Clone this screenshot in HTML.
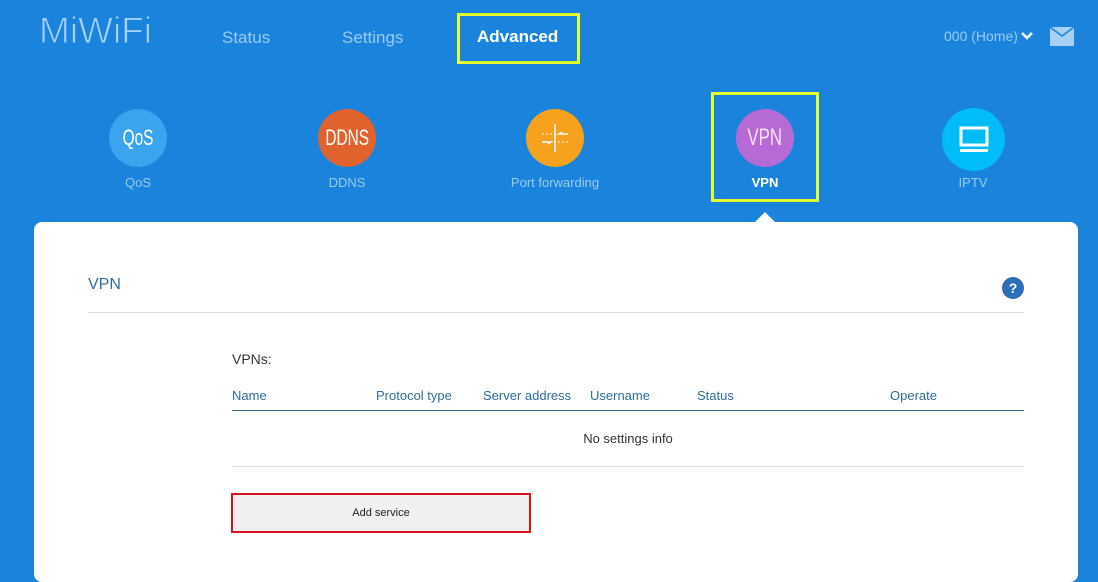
<!DOCTYPE html>
<html><head><style>
*{margin:0;padding:0;box-sizing:border-box}
body{width:1098px;height:565px;overflow:hidden;background:#1a84dc;font-family:"Liberation Sans",sans-serif;position:relative}
.a{position:absolute}
.logo{left:39px;top:10px;font-size:37px;color:#a8d0f5;font-family:"Liberation Sans",sans-serif;letter-spacing:0px;transform:scaleX(1.0);transform-origin:left;-webkit-text-stroke:1px #1a84dc}
.nav{top:28px;font-size:17px;color:#9ccaf2}
.yb{border:3px solid #e6ff2e}
.c{border-radius:50%;color:#fff;display:flex;align-items:center;justify-content:center;font-size:22px}
.c span{display:inline-block;transform:scaleX(0.7)}
.lbl{top:175px;font-size:13px;color:#9ccaf2;text-align:center;width:200px}
.card{left:34px;top:222px;width:1044px;height:360px;background:#fff;border-radius:8px}
.th{top:388px;font-size:13px;color:#2f6c9e}
</style></head><body>
<div class="a logo">MiWiFi</div>
<div class="a nav" style="left:222px">Status</div>
<div class="a nav" style="left:342px">Settings</div>
<div class="a yb" style="left:457px;top:13px;width:123px;height:51px"></div>
<div class="a nav" style="left:477px;top:27px;color:#fff;font-weight:bold">Advanced</div>
<div class="a" style="left:944px;top:28px;font-size:14px;color:#9ccaf2">000 (Home)</div>
<svg class="a" style="left:1020px;top:31px" width="14" height="10"><path d="M2 2l5 5 5-5" stroke="#fff" stroke-width="2.5" fill="none"/></svg>
<svg class="a" style="left:1050px;top:27px" width="24" height="19"><rect width="24" height="19" fill="#a8d0f5"/><path d="M0 0l12 9 12-9" stroke="#1a84dc" stroke-width="1.5" fill="none"/></svg>

<div class="a c" style="left:109px;top:109px;width:58px;height:58px;background:#3aa4ee"><span>QoS</span></div>
<div class="a lbl" style="left:38px">QoS</div>
<div class="a c" style="left:318px;top:109px;width:58px;height:58px;background:#e0632e"><span>DDNS</span></div>
<div class="a lbl" style="left:247px">DDNS</div>
<div class="a c" style="left:526px;top:109px;width:58px;height:58px;background:#f7a21e">
<svg width="40" height="40"><path d="M20 6v28" stroke="#fff" stroke-width="1.5"/><path d="M7 16h26M7 24h26" stroke="#fff" stroke-width="1" stroke-dasharray="2 2"/><path d="M33 16h-9l3-2M7 24h9l-3 2" stroke="#fff" stroke-width="1.5" fill="none"/></svg></div>
<div class="a lbl" style="left:455px">Port forwarding</div>
<div class="a yb" style="left:711px;top:92px;width:108px;height:110px"></div>
<div class="a c" style="left:736px;top:109px;width:58px;height:58px;background:#b66ad6;color:#fbe0ff;font-size:24px"><span>VPN</span></div>
<div class="a lbl" style="left:665px;color:#fff;font-weight:bold">VPN</div>
<div class="a c" style="left:942px;top:108px;width:63px;height:63px;background:#00bdf7">
<svg width="32" height="30"><rect x="3" y="3" width="26" height="17" fill="none" stroke="#fff" stroke-width="3"/><rect x="2" y="24" width="28" height="3" fill="#fff"/></svg></div>
<div class="a lbl" style="left:873px">IPTV</div>

<svg class="a" style="left:753px;top:210px" width="24" height="14"><path d="M0 14L12 2 24 14z" fill="#fff"/></svg>
<div class="a card"></div>
<div class="a" style="left:88px;top:276px;font-size:16px;color:#2f6c9e">VPN</div>
<div class="a c" style="left:1002px;top:277px;width:22px;height:22px;background:#2a6fb8;font-size:14px;font-weight:bold">?</div>
<div class="a" style="left:88px;top:312px;width:936px;height:1px;background:#ddd"></div>
<div class="a" style="left:232px;top:351px;font-size:14px;color:#333">VPNs:</div>
<div class="a th" style="left:232px">Name</div>
<div class="a th" style="left:376px">Protocol type</div>
<div class="a th" style="left:483px">Server address</div>
<div class="a th" style="left:590px">Username</div>
<div class="a th" style="left:697px">Status</div>
<div class="a th" style="left:890px">Operate</div>
<div class="a" style="left:232px;top:410px;width:792px;height:1px;background:#3e6a8c"></div>
<div class="a" style="left:232px;top:431px;width:792px;text-align:center;font-size:13px;color:#333">No settings info</div>
<div class="a" style="left:232px;top:466px;width:792px;height:1px;background:#ddd"></div>
<div class="a" style="left:231px;top:493px;width:300px;height:40px;border:2px solid #d6141c;background:#f0f0f0;font-size:11px;color:#222;text-align:center;line-height:36px">Add service</div>
</body></html>
